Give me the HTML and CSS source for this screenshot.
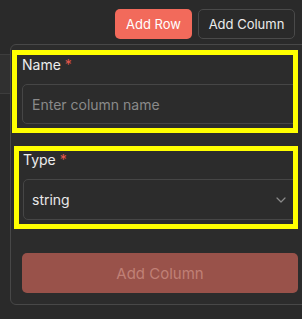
FILE: index.html
```html
<!DOCTYPE html>
<html lang="en">
<head>
    <meta charset="UTF-8">
    <meta name="viewport" content="width=device-width, initial-scale=1.0">
    <title>Add Column</title>
    <link rel="stylesheet" href="styles.css">
</head>
<body>
    <div id="toolbar">
        <button class="btn btn-primary">Add Row</button>
        <button class="btn btn-outline">Add Column</button>
    </div>
    <div id="table">
        <div class="table-head"></div>
    </div>

    <div id="popover">
        <div class="field field-name">
            <label class="field-label">Name <span class="req">*</span></label>
            <input class="field-input" type="text" placeholder="Enter column name">
        </div>
        <div class="field field-type">
            <label class="field-label">Type <span class="req">*</span></label>
            <div class="field-select">
                <span>string</span>
                <svg class="chevron" width="10" height="6" viewBox="0 0 10 6">
                    <path d="M1 1l4 4 4-4" fill="none" stroke="#8a8a8a" stroke-width="1.2" stroke-linecap="round" stroke-linejoin="round"/>
                </svg>
            </div>
        </div>
        <button class="btn btn-submit" disabled>Add Column</button>
    </div>
</body>
</html>
```

FILE: styles.css
```css
body {
    margin: 0;
    width: 302px;
    height: 319px;
    overflow: hidden;
    background-color: #2a2a2a;
    font-family: Inter, "Noto Sans", sans-serif;
    position: relative;
}
#toolbar {
    display: flex;
    justify-content: flex-end;
    gap: 6px;
    padding: 9px 7px 0 0;
}
.btn {
    height: 30px;
    border-radius: 5px;
    font-family: inherit;
    font-size: 13px;
    cursor: pointer;
}
.btn-primary {
    width: 77px;
    border: none;
    background-color: #f26a5b;
    color: #fff;
}
.btn-outline {
    width: 97px;
    border: 1px solid #4a4a4a;
    background-color: #2a2a2a;
    color: #ececec;
}
#table {
    margin-top: 15px;
}
.table-head {
    height: 38px;
    background-color: #303030;
    border-top: 1px solid #3d3d3d;
    border-bottom: 1px solid #3d3d3d;
}
#popover {
    position: absolute;
    top: 44px;
    left: 10px;
    width: 276px;
    padding: 5px 11px 11px 11px;
    background-color: #2c2c2c;
    border: 1px solid #484848;
    border-radius: 6px;
}
.field {
    border: 5px solid #ffff00;
    overflow: hidden;
}
.field-name {
    margin-left: -10px;
    padding: 0 0 4px 5px;
}
.field-type {
    margin-top: 13px;
    margin-left: -8px;
    padding: 0 0 4px 4px;
}
.field-label {
    display: block;
    font-size: 14px;
    line-height: 20px;
    color: #ededed;
    margin-bottom: 9px;
}
.field-type .field-label {
    line-height: 18px;
    margin-bottom: 10px;
}
.req {
    color: #e5574b;
}
.field-input {
    box-sizing: border-box;
    width: calc(100% + 6px);
    height: 40px;
    padding: 0 9px;
    background-color: #2c2c2c;
    border: 1px solid #464646;
    border-radius: 5px;
    font-family: inherit;
    font-size: 14px;
    color: #ededed;
    outline: none;
}
.field-input::placeholder {
    color: #8a8a8a;
}
.field-select {
    box-sizing: border-box;
    width: calc(100% + 6px);
    height: 41px;
    display: flex;
    align-items: center;
    justify-content: space-between;
    padding: 0 12px 0 8px;
    border: 1px solid #464646;
    border-radius: 5px;
    font-size: 14px;
    color: #e8e8e8;
}
.btn-submit {
    display: block;
    width: 100%;
    height: 40px;
    margin-top: 24px;
    border: none;
    background-color: #99524a;
    color: #c08076;
    font-size: 15px;
    cursor: default;
}
```
